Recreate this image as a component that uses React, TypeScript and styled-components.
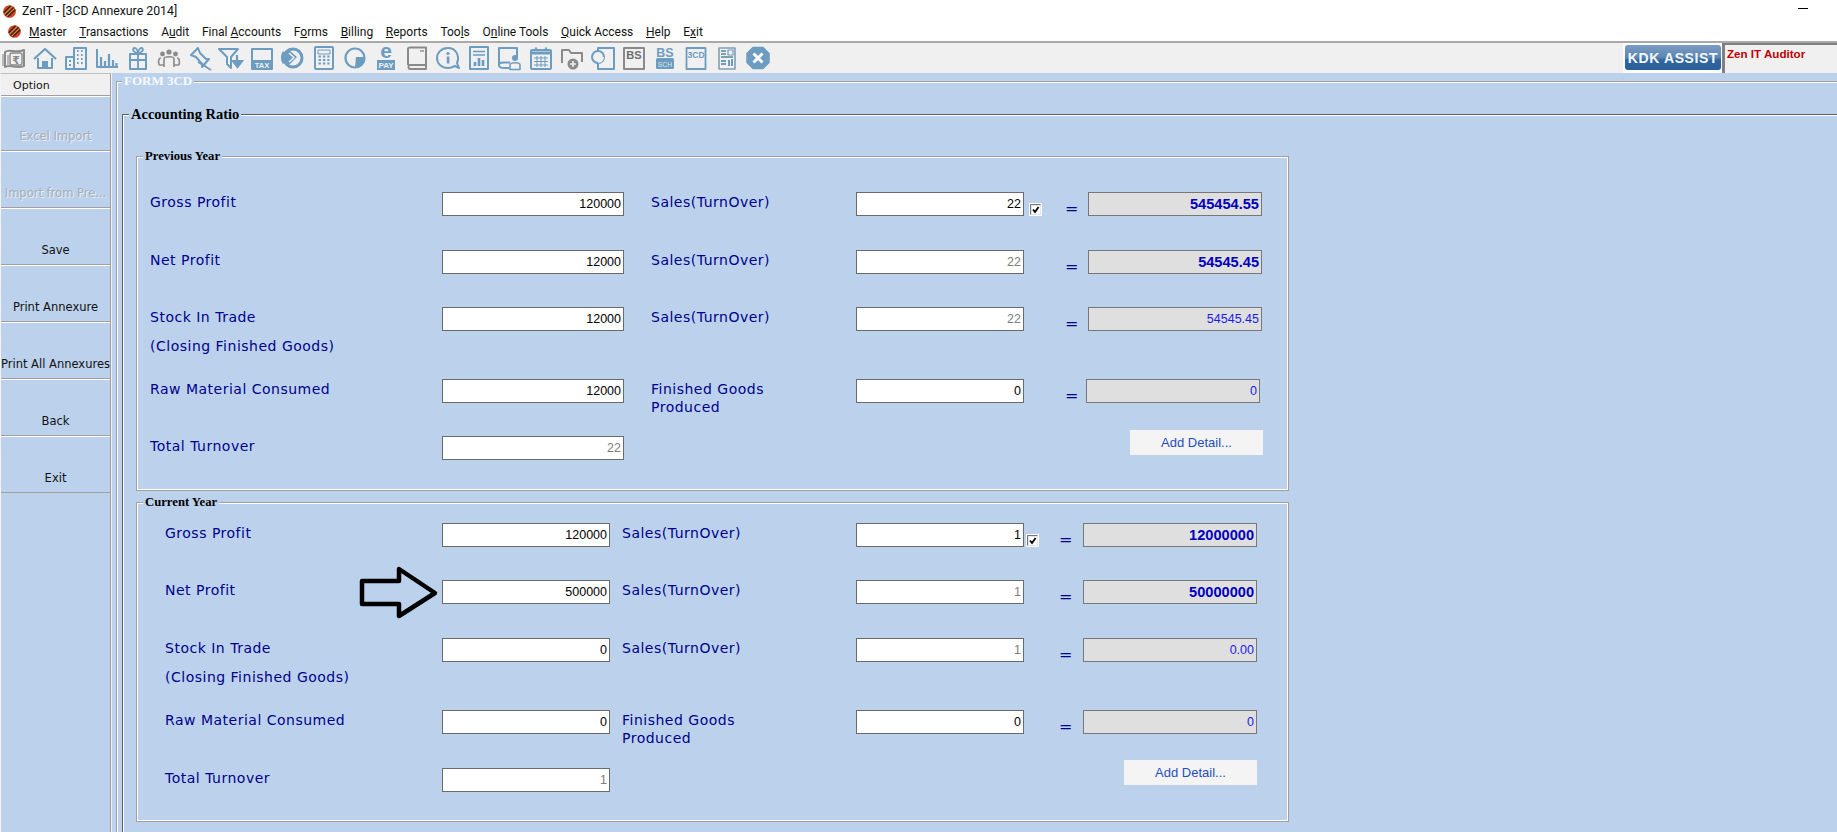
import React from "react";
import styled, { createGlobalStyle } from "styled-components";

const Global = createGlobalStyle`
  html, body { margin: 0; padding: 0; width: 100%; height: 100%; overflow: hidden; background: #bcd2ec; }
  #root { height: 100%; }
  * { box-sizing: border-box; }
`;

const BLUE = "#6c9cbf";
const GRAY = "#8a8a8a";
const UI = `Roboto, "Noto Sans", "Liberation Sans", sans-serif`;
const LABEL = `"DejaVu Sans", Verdana, sans-serif`;
const NUM = `"Liberation Sans", Arial, sans-serif`;
const SERIF = `"Liberation Serif", "Times New Roman", serif`;

const Page = styled.div`
  width: 1837px;
  height: 832px;
  display: flex;
  flex-direction: column;
  overflow: hidden;
  background: #bcd2ec;
`;

const TitleBar = styled.header`
  height: 22px;
  background: #fff;
  display: flex;
  align-items: center;
  padding-left: 2px;
  position: relative;
`;
const TitleText = styled.span`
  font: 12.3px/20px ${UI};
  color: #111;
  margin-left: 5px;
`;
const MinimizeMark = styled.span`
  margin-left: auto;
  margin-right: 29px;
  width: 10px;
  height: 1px;
  background: #000;
  align-self: flex-start;
  margin-top: 8px;
`;

const MenuBar = styled.nav`
  height: 19px;
  background: #fff;
  display: flex;
  align-items: center;
  padding-left: 7px;
`;
const MenuItem = styled.span<{ $left: number }>`
  font: 12px/18px ${UI};
  color: #111;
  margin-left: ${(p) => p.$left}px;
  white-space: nowrap;
`;

const ToolBar = styled.div`
  height: 32px;
  background: #f0f0f0;
  border-top: 2px solid #a9a9a9;
  display: flex;
  align-items: stretch;
`;
const IconRow = styled.div`
  display: flex;
  gap: 5px;
  padding-left: 1px;
  align-items: center;
  flex: 1;
`;
const IconBox = styled.svg`
  width: 26px;
  height: 26px;
  flex: none;
  overflow: visible;
`;
const AssistSlot = styled.div`
  width: 99px;
  background: #fbfbfb;
  padding: 2px 1px 3px 2px;
  display: flex;
`;
const AssistButton = styled.button`
  flex: 1;
  border: 0;
  padding: 0;
  border-radius: 3px;
  background: linear-gradient(#7a9cc2 0%, #5f88b5 48%, #2f659e 62%, #2b5f98 100%);
  color: #f4f8fc;
  font: bold 14px ${NUM};
  letter-spacing: 0.6px;
`;
const AuditorPanel = styled.div`
  width: 115px;
  border-left: 3px solid #808080;
  border-top: 2px solid #808080;
  background: #f0f0f0;
  padding: 1px 0 0 2px;
  font: bold 11.6px/16px ${NUM};
  color: #c00000;
  white-space: nowrap;
`;

const Body = styled.div`
  flex: 1;
  display: flex;
  min-height: 0;
`;

const Sidebar = styled.aside`
  width: 111px;
  flex: none;
  border-right: 1px solid #a0a0a0;
  border-left: 1px solid #f4f4f4;
  border-top: 1px solid #c0c0c0;
  display: flex;
  flex-direction: column;
  background: #bcd2ec;
`;
const OptionHead = styled.div`
  height: 22px;
  background: #f0f0f0;
  border-bottom: 1px solid #a0a0a0;
  padding: 1px 0 0 12px;
  font: 11px/21px ${LABEL};
  color: #111;
`;
const SideButton = styled.div<{ $h: number; $off?: boolean }>`
  height: ${(p) => p.$h}px;
  border-top: 1px solid #fff;
  border-bottom: 1px solid #a0a0a0;
  display: flex;
  align-items: flex-end;
  justify-content: center;
  padding-bottom: 7px;
  font: 11.5px/14px ${LABEL};
  white-space: nowrap;
  color: ${(p) => (p.$off ? "#a6aeb8" : "#111")};
  text-shadow: ${(p) => (p.$off ? "1px 1px 0 #e8eef6" : "none")};
`;

const Main = styled.main`
  flex: 1;
  min-width: 0;
  overflow: hidden;
  border-left: 1px solid #eef2f7;
  padding-left: 4px;
`;

const Frame = styled.fieldset<{ $line: string; $w: number; $top?: number; $h?: number }>`
  margin: ${(p) => p.$top ?? 0}px 0 0 0;
  min-width: 0;
  width: ${(p) => p.$w}px;
  ${(p) => (p.$h ? `height: ${p.$h}px;` : "")}
  border: 1px solid ${(p) => p.$line};
  box-shadow: inset 1px 1px 0 #fff, inset -1px -1px 0 #fff;
  padding: 0;
`;
const Legend = styled.legend<{ $size: number; $lh: number; $color: string; $left: number }>`
  margin-left: ${(p) => p.$left}px;
  padding: 0 2px;
  background: #bcd2ec;
  font: bold ${(p) => p.$size}px/${(p) => p.$lh}px ${SERIF};
  color: ${(p) => p.$color};
`;
const FrameBody = styled.div<{ $pad: string }>`
  padding: ${(p) => p.$pad};
`;

const Row = styled.div<{ $cols: string; $h: number }>`
  position: relative;
  display: grid;
  grid-template-columns: ${(p) => p.$cols};
  grid-auto-rows: 24px;
  height: ${(p) => p.$h}px;
`;
const Label = styled.div`
  font: 14px/18px ${LABEL};
  letter-spacing: 0.5px;
  color: #00008b;
  padding-top: 1px;
  white-space: nowrap;
`;
const SecondLine = styled.div<{ $gap: number }>`
  margin-top: ${(p) => p.$gap}px;
`;
const Field = styled.div<{ $muted?: boolean }>`
  height: 24px;
  border: 1px solid #6a6a6a;
  background: #fff;
  padding: 2px 2px 0 0;
  text-align: right;
  font: 12.5px/18px ${NUM};
  color: ${(p) => (p.$muted ? "#7c7c7c" : "#000")};
`;
const Result = styled.div<{ $bold?: boolean; $shift?: number }>`
  height: 24px;
  border: 1px solid #777;
  background: #dfdfdf;
  padding: 2px 2px 0 0;
  text-align: right;
  margin-left: ${(p) => p.$shift ?? 0}px;
  margin-right: ${(p) => -(p.$shift ?? 0)}px;
  font: ${(p) => (p.$bold ? "bold 14.6px" : "12.5px")}/18px ${NUM};
  color: ${(p) => (p.$bold ? "#0000c0" : "#1a1af0")};
`;
const Equals = styled.div`
  font: 16px/16px ${LABEL};
  color: #00008b;
  padding-top: 9px;
  text-align: left;
`;
const Tick = styled.div<{ $left: number }>`
  width: 13px;
  height: 13px;
  margin: 11px 0 0 ${(p) => p.$left}px;
  background: #fff;
  padding: 1px;
`;
const TickFace = styled.svg`
  display: block;
  width: 11px;
  height: 11px;
  background: #e4e4e4;
`;
const AddDetail = styled.button<{ $up: number; $w: number }>`
  grid-column: -3 / -1;
  justify-self: end;
  width: ${(p) => p.$w}px;
  height: 25px;
  margin: ${(p) => -p.$up}px ${(p) => (p.$up === 6 ? -1 : 0)}px 0 0;
  border: 0;
  padding: 0;
  background: #f4f4f4;
  font: 13px ${NUM};
  color: #1f4fbf;
`;
const ArrowMark = styled.svg`
  position: absolute;
  left: 193px;
  top: -14px;
  width: 82px;
  height: 54px;
`;
const Spacer = styled.div``;
const LogoMark = styled.svg`
  width: 15px;
  height: 15px;
  flex: none;
`;

const stroke = (c: string, w = 2) => ({ fill: "none", stroke: c, strokeWidth: w, strokeLinejoin: "round" as const });

const AppLogo = () => (
  <LogoMark viewBox="0 0 26 26">
    <circle cx="13" cy="13" r="11" fill="#d8401f" />
    <path d="M6 20 L20 6 M10 22 L23 10 M3 15 L15 3" stroke="#2a2a20" strokeWidth="2.4" />
    <path d="M8 21 L21 8 M4 18 L18 4" stroke="#e8b040" strokeWidth="1.4" />
  </LogoMark>
);

const icons: React.ReactNode[] = [
  <g key="rupee">
    <path d="M4 7 C9 3 14 9 23 5 L23 21 C15 24 9 19 4 22 Z" {...stroke(GRAY)} />
    <path d="M7 10 L7 21 M2 9 L2 21" {...stroke("#a8a8a8", 1.5)} />
    <rect x="9" y="8" width="12" height="12" rx="2" {...stroke(GRAY, 1.4)} />
    <text x="15" y="18.5" textAnchor="middle" fontSize="11" fontFamily="DejaVu Sans" fontWeight="bold" fill={GRAY}>₹</text>
  </g>,
  <g key="home">
    <path d="M2 14 L13 4 L24 14" {...stroke(BLUE, 2.2)} />
    <path d="M6 13 V23 H20 V13" {...stroke(BLUE)} />
    <rect x="10" y="16" width="6" height="7" fill={BLUE} />
  </g>,
  <g key="building">
    <rect x="11" y="3" width="12" height="21" {...stroke(BLUE)} />
    <rect x="3" y="12" width="8" height="12" {...stroke(BLUE)} />
    <path d="M14 6 h1.6 M18 6 h1.6 M14 10 h1.6 M18 10 h1.6 M14 14 h1.6 M18 14 h1.6 M14 18 h1.6 M18 18 h1.6 M6 16 h2 M6 20 h2" {...stroke(BLUE, 2)} />
  </g>,
  <g key="chart">
    <path d="M3 4 V22 H24" {...stroke(BLUE)} />
    <path d="M7 21 V12 M11 21 V16 M15 21 V9 M19 21 V15 M22.5 21 V18" {...stroke(BLUE, 2.2)} />
  </g>,
  <g key="gift">
    <rect x="5" y="9" width="16" height="15" {...stroke(BLUE)} />
    <path d="M5 15 H21 M13 9 V24 M13 8 C9 8 7 5 9 3 C11 2 13 6 13 8 C13 6 15 2 17 3 C19 5 17 8 13 8" {...stroke(BLUE, 1.8)} />
  </g>,
  <g key="people">
    <circle cx="13" cy="7" r="2.6" fill={GRAY} />
    <circle cx="6.5" cy="9" r="2.4" fill={GRAY} />
    <circle cx="19.5" cy="9" r="2.4" fill={GRAY} />
    <path d="M8 22 V14 C8 11 18 11 18 14 V22 M3 20 C2 15 3 13 5 13 M23 20 C24 15 23 13 21 13 M3 20 H8 M18 20 H23" {...stroke(GRAY, 1.6)} />
  </g>,
  <g key="pin">
    <path d="M11 3 L4 10 L9 12 L15 19 L15 22 L22 14 L19 14 L13 8 Z" {...stroke(BLUE, 2)} />
    <path d="M11 17 L24 25 M12 16 L22 24" {...stroke(BLUE, 1.6)} />
  </g>,
  <g key="filter">
    <path d="M1 4 H20 L13 12 V23 L9 19 V12 Z" {...stroke(BLUE, 2)} />
    <path d="M19 10 V17 M15 16 H24 L19.5 22 Z" fill={BLUE} stroke={BLUE} strokeWidth="2.2" />
  </g>,
  <g key="tax">
    <rect x="3" y="4" width="20" height="20" {...stroke(BLUE)} />
    <rect x="3" y="15" width="20" height="9" fill={BLUE} />
    <text x="13" y="22.8" textAnchor="middle" fontSize="7.6" fontFamily="Liberation Sans" fontWeight="bold" fill="#f0f0f0">TAX</text>
  </g>,
  <g key="pie">
    <circle cx="13" cy="13" r="9" {...stroke(BLUE, 3)} />
    <path d="M13 13 L3 6 A11 11 0 0 0 3 19 Z" fill={BLUE} />
    <path d="M9 5 L17 12 L9 20 A9 9 0 0 1 9 5 Z" fill={BLUE} />
    <path d="M9 8 L14 12.5 L9 17" {...stroke("#f0f0f0", 1.6)} />
  </g>,
  <g key="calc">
    <rect x="4" y="2" width="18" height="22" rx="1" {...stroke(BLUE)} />
    <rect x="7" y="5" width="12" height="4" {...stroke(BLUE, 1)} />
    <path d="M7.5 11.5 h11 M7.5 15 h11 M7.5 18.5 h11" stroke={BLUE} strokeWidth="2" strokeDasharray="2.4 2" />
  </g>,
  <g key="ring">
    <circle cx="13" cy="13" r="9.5" {...stroke(BLUE, 2.2)} />
    <path d="M14 12 H22 A9 9 0 0 1 13 22 Z" fill={BLUE} />
  </g>,
  <g key="epay">
    <text x="13" y="13" textAnchor="middle" fontSize="21" fontFamily="Liberation Sans" fontWeight="bold" fill={BLUE}>e</text>
    <rect x="4" y="15" width="18" height="10" fill={BLUE} />
    <text x="13" y="23.2" textAnchor="middle" fontSize="8" fontFamily="Liberation Sans" fontWeight="bold" fill="#f0f0f0">PAY</text>
  </g>,
  <g key="book">
    <path d="M4 20 V4 C4 3 5 2.5 6 2.5 H22 V24 H6 C4 24 4 20 6 20 H22" {...stroke(GRAY, 2)} />
    <path d="M16 6 H20" {...stroke(GRAY, 1.4)} />
  </g>,
  <g key="info">
    <path d="M22 18 C25 11 21 3 13 3 C6 3 2 8 2 13 C2 19 7 23 13 23 C16 23 18 22 20 21 L24 23 Z" {...stroke(BLUE, 2)} />
    <circle cx="13" cy="8.5" r="1.6" fill={BLUE} />
    <rect x="11.8" y="11.5" width="2.6" height="7" fill={BLUE} />
  </g>,
  <g key="report">
    <rect x="4" y="2" width="18" height="22" {...stroke(BLUE)} />
    <path d="M7 6.5 H19 M7 10 H19" {...stroke(BLUE, 1.4)} />
    <path d="M9 21 V17 M13 21 V13 M17 21 V15" {...stroke(BLUE, 2.6)} />
  </g>,
  <g key="bookuser">
    <path d="M2 20 V3 H20 V12 M2 20 C2 17 4 17.5 13 17.5 M2 20 C2 23 4 23 12 23" {...stroke(BLUE, 2)} />
    <circle cx="18" cy="13" r="3" fill={BLUE} />
    <path d="M13 24.5 V20 C13 17 23 17 23 20 V24.5 Z" {...stroke(BLUE, 1.6)} />
  </g>,
  <g key="calendar">
    <rect x="3" y="5" width="20" height="19" rx="1" {...stroke(BLUE)} />
    <path d="M3 8 H23" {...stroke(BLUE, 3)} />
    <path d="M8 2.5 V6 M18 2.5 V6" {...stroke(BLUE, 2.2)} />
    <path d="M6 13 H20 M6 16.5 H20 M6 20 H20 M9 11 V22 M13 11 V22 M17 11 V22" {...stroke(BLUE, 1)} />
  </g>,
  <g key="folder">
    <path d="M3 18 V5 H10 L12 8 H23 V17" {...stroke(GRAY, 2)} />
    <circle cx="14" cy="19" r="5.5" fill={GRAY} />
    <path d="M14 16 V22 M11 19 H17" {...stroke("#f0f0f0", 1.6)} />
  </g>,
  <g key="docround">
    <rect x="8" y="3" width="16" height="21" {...stroke(BLUE)} />
    <circle cx="8" cy="12" r="6" fill="#f0f0f0" stroke={BLUE} strokeWidth="2" />
    <path d="M8 12 H14 A6 6 0 0 1 8 18 Z" fill="#f0f0f0" />
  </g>,
  <g key="bs">
    <rect x="3" y="3" width="20" height="21" {...stroke(GRAY, 2)} />
    <text x="13" y="14" textAnchor="middle" fontSize="11" fontFamily="Liberation Sans" fontWeight="bold" fill="#6e6e6e">BS</text>
  </g>,
  <g key="bssch">
    <text x="13" y="12" textAnchor="middle" fontSize="12.5" fontFamily="Liberation Sans" fontWeight="bold" fill={BLUE}>BS</text>
    <rect x="4" y="13" width="18" height="11" rx="1.5" fill={BLUE} />
    <text x="13" y="22" textAnchor="middle" fontSize="6.8" fontFamily="Liberation Sans" fill="#dbe6ee">SCH</text>
  </g>,
  <g key="3cd">
    <rect x="3.5" y="3" width="19" height="21" {...stroke(BLUE, 1.8)} />
    <text x="13" y="12.5" textAnchor="middle" fontSize="8.6" fontFamily="Liberation Sans" fontWeight="bold" fill={BLUE}>3CD</text>
  </g>,
  <g key="grid">
    <rect x="5" y="3" width="16" height="21" {...stroke("#7f9fb5", 1.6)} />
    <rect x="14" y="5" width="5" height="5" {...stroke(BLUE, 1.2)} />
    <path d="M7 6 H12 M7 9 H12 M7 12 H19" {...stroke("#4d8f8a", 1.4)} />
    <path d="M15 21 V15 M18 21 V14 M7 16 H12 M7 19 H12" {...stroke(BLUE, 2)} />
  </g>,
  <g key="close">
    <path d="M8 2.5 H18 L24 8.5 V17.5 L18 23.5 H8 L2 17.5 V8.5 Z" fill={BLUE} stroke={BLUE} strokeLinejoin="round" strokeWidth="1.5" />
    <path d="M8.5 8.5 L17.5 17.5 M17.5 8.5 L8.5 17.5" {...stroke("#fff", 3)} />
  </g>,
];

const CheckBox = ({ left }: { left: number }) => (
  <Tick $left={left}>
    <TickFace viewBox="0 0 11 11">
      <path d="M0.5 10.5 V0.5 H10.5" fill="none" stroke="#777" />
      <rect x="2" y="2" width="8" height="8" fill="#fff" />
      <path d="M3 5.5 L5 8 L8.6 3" fill="none" stroke="#000" strokeWidth="1.8" />
    </TickFace>
  </Tick>
);

const Lbl = ({ a, b, gap }: { a: string; b?: string; gap?: number }) => (
  <Label>
    {a}
    {b && <SecondLine $gap={gap ?? 0}>{b}</SecondLine>}
  </Label>
);

const PREV = "292px 182px 27px 205px 168px 41px 23px 174px";
const CURR = "277px 168px 12px 234px 168px 35px 24px 174px";

const menu: [number, React.ReactNode][] = [
  [7, <><u>M</u>aster</>],
  [12.7, <><u>T</u>ransactions</>],
  [12.7, <>A<u>u</u>dit</>],
  [12.7, <>Final <u>A</u>ccounts</>],
  [12.7, <>F<u>o</u>rms</>],
  [12.7, <><u>B</u>illing</>],
  [12.7, <><u>R</u>eports</>],
  [12.7, <>Too<u>l</u>s</>],
  [12.7, <>O<u>n</u>line Tools</>],
  [12.7, <><u>Q</u>uick Access</>],
  [12.7, <><u>H</u>elp</>],
  [12.7, <>E<u>x</u>it</>],
];

export default function App() {
  return (
    <Page>
      <Global />
      <TitleBar>
        <AppLogo />
        <TitleText>ZenIT - [3CD Annexure 2014]</TitleText>
        <MinimizeMark />
      </TitleBar>
      <MenuBar>
        <AppLogo />
        {menu.map(([left, node], i) => (
          <MenuItem key={i} $left={left}>{node}</MenuItem>
        ))}
      </MenuBar>
      <ToolBar>
        <IconRow>
          {icons.map((icon, i) => (
            <IconBox key={i} viewBox="0 0 26 26">{icon}</IconBox>
          ))}
        </IconRow>
        <AssistSlot><AssistButton>KDK ASSIST</AssistButton></AssistSlot>
        <AuditorPanel>Zen IT Auditor</AuditorPanel>
      </ToolBar>
      <Body>
        <Sidebar>
          <OptionHead>Option</OptionHead>
          <SideButton $h={55} $off>Excel Import</SideButton>
          <SideButton $h={57} $off>Import from Pre...</SideButton>
          <SideButton $h={57}>Save</SideButton>
          <SideButton $h={57}>Print Annexure</SideButton>
          <SideButton $h={57}>Print All Annexures</SideButton>
          <SideButton $h={57}>Back</SideButton>
          <SideButton $h={57}>Exit</SideButton>
        </Sidebar>
        <Main>
          <Frame $line="#a0a0a0" $w={1800} $h={900}>
            <Legend $size={13} $lh={16} $color="#f6f9fd" $left={5}>FORM 3CD</Legend>
            <FrameBody $pad="16px 0 0 5px">
              <Frame $line="#606060" $w={1760} $h={800}>
                <Legend $size={14.5} $lh={18} $color="#000" $left={6}>Accounting Ratio</Legend>
                <FrameBody $pad="25px 0 0 13px">
                  <Frame $line="#a0a0a0" $w={1153}>
                    <Legend $size={12.7} $lh={16} $color="#000" $left={6}>Previous Year</Legend>
                    <FrameBody $pad="28px 0 30px 13px">
                      <Row $cols={PREV} $h={58}>
                        <Lbl a="Gross Profit" /><Field>120000</Field><Spacer /><Lbl a="Sales(TurnOver)" /><Field>22</Field>
                        <CheckBox left={5} /><Equals>=</Equals><Result $bold>545454.55</Result>
                      </Row>
                      <Row $cols={PREV} $h={57}>
                        <Lbl a="Net Profit" /><Field>12000</Field><Spacer /><Lbl a="Sales(TurnOver)" /><Field $muted>22</Field>
                        <Spacer /><Equals>=</Equals><Result $bold>54545.45</Result>
                      </Row>
                      <Row $cols={PREV} $h={72}>
                        <Lbl a="Stock In Trade" b="(Closing Finished Goods)" gap={11} /><Field>12000</Field><Spacer /><Lbl a="Sales(TurnOver)" /><Field $muted>22</Field>
                        <Spacer /><Equals>=</Equals><Result>54545.45</Result>
                      </Row>
                      <Row $cols={PREV} $h={57}>
                        <Lbl a="Raw Material Consumed" /><Field>12000</Field><Spacer /><Lbl a="Finished Goods" b="Produced" /><Field>0</Field>
                        <Spacer /><Equals>=</Equals><Result $shift={-2}>0</Result>
                      </Row>
                      <Row $cols={PREV} $h={24}>
                        <Lbl a="Total Turnover" /><Field $muted>22</Field>
                        <AddDetail $up={6} $w={133}>Add Detail...</AddDetail>
                      </Row>
                    </FrameBody>
                  </Frame>
                  <Frame $line="#a0a0a0" $w={1153} $top={3}>
                    <Legend $size={12.7} $lh={16} $color="#000" $left={6}>Current Year</Legend>
                    <FrameBody $pad="13px 0 29px 28px">
                      <Row $cols={CURR} $h={57}>
                        <Lbl a="Gross Profit" /><Field>120000</Field><Spacer /><Lbl a="Sales(TurnOver)" /><Field>1</Field>
                        <CheckBox left={1.5} /><Equals>=</Equals><Result $bold>12000000</Result>
                      </Row>
                      <Row $cols={CURR} $h={58}>
                        <Lbl a="Net Profit" /><Field>500000</Field><Spacer /><Lbl a="Sales(TurnOver)" /><Field $muted>1</Field>
                        <Spacer /><Equals>=</Equals><Result $bold>50000000</Result>
                        <ArrowMark viewBox="0 0 82 54">
                          <path d="M4 15 H41 V3 L77 27 L41 50 V38 H4 Z" fill="none" stroke="#000" strokeWidth="4.5" strokeLinejoin="round" />
                        </ArrowMark>
                      </Row>
                      <Row $cols={CURR} $h={72}>
                        <Lbl a="Stock In Trade" b="(Closing Finished Goods)" gap={11} /><Field>0</Field><Spacer /><Lbl a="Sales(TurnOver)" /><Field $muted>1</Field>
                        <Spacer /><Equals>=</Equals><Result>0.00</Result>
                      </Row>
                      <Row $cols={CURR} $h={58}>
                        <Lbl a="Raw Material Consumed" /><Field>0</Field><Spacer /><Lbl a="Finished Goods" b="Produced" /><Field>0</Field>
                        <Spacer /><Equals>=</Equals><Result>0</Result>
                      </Row>
                      <Row $cols={CURR} $h={24}>
                        <Lbl a="Total Turnover" /><Field $muted>1</Field>
                        <AddDetail $up={8} $w={133}>Add Detail...</AddDetail>
                      </Row>
                    </FrameBody>
                  </Frame>
                </FrameBody>
              </Frame>
            </FrameBody>
          </Frame>
        </Main>
      </Body>
    </Page>
  );
}
